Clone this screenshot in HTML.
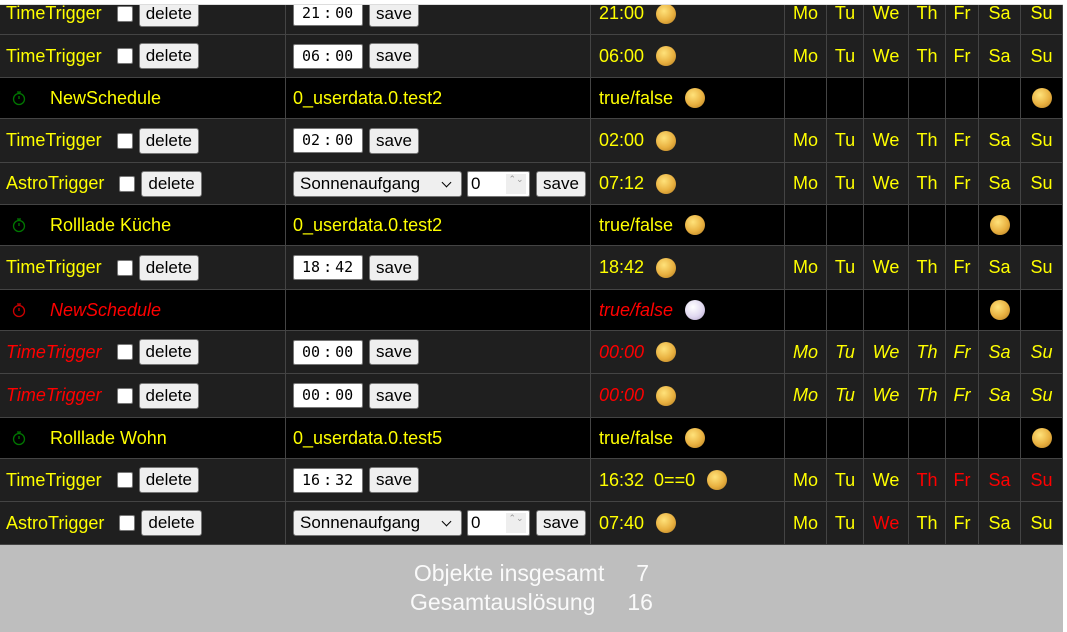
<!DOCTYPE html>
<html><head><meta charset="utf-8"><style>
*{box-sizing:border-box;margin:0;padding:0}
body{width:1067px;height:632px;background:#fff;font-family:"Liberation Sans",sans-serif;font-size:18px;color:#ff0;overflow:hidden;position:relative}
#t{position:absolute;left:0;top:4px;width:1063px;border-top:1px solid #ddd}
.r{display:flex;border-bottom:1px solid #444;background:#1f1f1f;overflow:hidden}
.r.s{background:#000}
.r.first .c{padding-bottom:12px}
.c{border-right:1px solid #444;display:flex;align-items:center;white-space:nowrap;flex:none}
.c1{width:286px;padding-left:6px}.c2{width:305px;padding-left:7px}.c3{width:194px;padding-left:8px}
.d{justify-content:center}
.w1{width:42px}.w2{width:37px}.w3{width:45px}.w4{width:37px}.w5{width:33px}.w6{width:42px}.w7{width:42px}
.cb{display:inline-block;width:16px;height:16px;background:#fff;border:1px solid #777;border-radius:2px}
.btn{display:inline-block;background:#efefef;border:1px solid #767676;border-radius:3px;color:#000;font-size:17px;padding:0 6px;height:26px;line-height:24px}
.tm{display:inline-block;width:70px;height:25px;background:#fff;border:1px solid #767676;border-radius:2px;color:#000;font-family:"DejaVu Sans Mono","Liberation Mono",monospace;font-size:15px;line-height:23px;padding-left:8px;overflow:hidden}
.tm i{font-style:normal;margin:0 3px}
.sel{display:inline-block;width:169px;height:26px;background:#efefef;border:1px solid #767676;border-radius:3px;color:#000;font-size:17px;line-height:24px;padding-left:6px;position:relative}
.sel:after{content:"";position:absolute;right:11px;top:7px;width:6px;height:6px;border-right:1.5px solid #000;border-bottom:1.5px solid #000;transform:rotate(45deg)}
.num{display:inline-block;width:63px;height:26px;background:#fff;border:1px solid #767676;border-radius:2px;color:#000;font-size:17px;line-height:24px;padding-left:3px;position:relative}
.num:after{content:"⌃⌄";position:absolute;right:3px;top:2px;width:20px;height:20px;background:#eee;color:#999;font-size:9px;line-height:10px;text-align:center;white-space:pre-wrap;word-break:break-all}
.sun{display:inline-block;width:20px;height:20px;border-radius:50%;background:radial-gradient(circle at 40% 35%,#ffe27a,#e8b040 55%,#b07a20)}
.moon{display:inline-block;width:20px;height:20px;border-radius:50%;background:radial-gradient(circle at 40% 35%,#fff,#e0d8f0 55%,#b0a0c8)}
.red{color:#f00}.it{font-style:italic}
#f{position:absolute;left:0;top:545px;width:1063px;height:87px;background:#bebebe;color:#fafafa;font-size:23px;text-align:center;line-height:29px;padding-top:14px}
</style></head><body>
<div id="t">
<div class="r first" style="height:30px"><div class="c c1">TimeTrigger<span class="cb" style="margin-left:15px"></span><span class="btn" style="margin-left:6px">delete</span></div><div class="c c2"><span class="tm">21<i>:</i>00</span><span class="btn" style="margin-left:6px">save</span></div><div class="c c3">21:00<span class="sun" style="margin-left:12px"></span></div><div class="c d w1">Mo</div><div class="c d w2">Tu</div><div class="c d w3">We</div><div class="c d w4">Th</div><div class="c d w5">Fr</div><div class="c d w6">Sa</div><div class="c d w7">Su</div></div>
<div class="r" style="height:43px"><div class="c c1">TimeTrigger<span class="cb" style="margin-left:15px"></span><span class="btn" style="margin-left:6px">delete</span></div><div class="c c2"><span class="tm">06<i>:</i>00</span><span class="btn" style="margin-left:6px">save</span></div><div class="c c3">06:00<span class="sun" style="margin-left:12px"></span></div><div class="c d w1">Mo</div><div class="c d w2">Tu</div><div class="c d w3">We</div><div class="c d w4">Th</div><div class="c d w5">Fr</div><div class="c d w6">Sa</div><div class="c d w7">Su</div></div>
<div class="r s" style="height:41px"><div class="c c1"><svg width="16" height="18" style="margin-left:5px" viewBox="0 0 16 18"><circle cx="8" cy="10" r="5.5" fill="none" stroke="#070" stroke-width="1.3"/><path d="M6 3h4M8 3v2M8 10V7" stroke="#070" stroke-width="1.3"/></svg><span style="margin-left:23px">NewSchedule</span></div><div class="c c2">0_userdata.0.test2</div><div class="c c3">true/false<span class="sun" style="margin-left:12px"></span></div><div class="c d w1"></div><div class="c d w2"></div><div class="c d w3"></div><div class="c d w4"></div><div class="c d w5"></div><div class="c d w6"></div><div class="c d w7"><span class="sun"></span></div></div>
<div class="r" style="height:44px"><div class="c c1">TimeTrigger<span class="cb" style="margin-left:15px"></span><span class="btn" style="margin-left:6px">delete</span></div><div class="c c2"><span class="tm">02<i>:</i>00</span><span class="btn" style="margin-left:6px">save</span></div><div class="c c3">02:00<span class="sun" style="margin-left:12px"></span></div><div class="c d w1">Mo</div><div class="c d w2">Tu</div><div class="c d w3">We</div><div class="c d w4">Th</div><div class="c d w5">Fr</div><div class="c d w6">Sa</div><div class="c d w7">Su</div></div>
<div class="r" style="height:42px"><div class="c c1">AstroTrigger<span class="cb" style="margin-left:15px"></span><span class="btn" style="margin-left:6px">delete</span></div><div class="c c2"><span class="sel">Sonnenaufgang</span><span class="num" style="margin-left:5px">0</span><span class="btn" style="margin-left:6px">save</span></div><div class="c c3">07:12<span class="sun" style="margin-left:12px"></span></div><div class="c d w1">Mo</div><div class="c d w2">Tu</div><div class="c d w3">We</div><div class="c d w4">Th</div><div class="c d w5">Fr</div><div class="c d w6">Sa</div><div class="c d w7">Su</div></div>
<div class="r s" style="height:41px"><div class="c c1"><svg width="16" height="18" style="margin-left:5px" viewBox="0 0 16 18"><circle cx="8" cy="10" r="5.5" fill="none" stroke="#070" stroke-width="1.3"/><path d="M6 3h4M8 3v2M8 10V7" stroke="#070" stroke-width="1.3"/></svg><span style="margin-left:23px">Rolllade Küche</span></div><div class="c c2">0_userdata.0.test2</div><div class="c c3">true/false<span class="sun" style="margin-left:12px"></span></div><div class="c d w1"></div><div class="c d w2"></div><div class="c d w3"></div><div class="c d w4"></div><div class="c d w5"></div><div class="c d w6"><span class="sun"></span></div><div class="c d w7"></div></div>
<div class="r" style="height:44px"><div class="c c1">TimeTrigger<span class="cb" style="margin-left:15px"></span><span class="btn" style="margin-left:6px">delete</span></div><div class="c c2"><span class="tm">18<i>:</i>42</span><span class="btn" style="margin-left:6px">save</span></div><div class="c c3">18:42<span class="sun" style="margin-left:12px"></span></div><div class="c d w1">Mo</div><div class="c d w2">Tu</div><div class="c d w3">We</div><div class="c d w4">Th</div><div class="c d w5">Fr</div><div class="c d w6">Sa</div><div class="c d w7">Su</div></div>
<div class="r s" style="height:41px"><div class="c c1"><svg width="16" height="18" style="margin-left:5px" viewBox="0 0 16 18"><circle cx="8" cy="10" r="5.5" fill="none" stroke="#c00" stroke-width="1.3"/><path d="M6 3h4M8 3v2M8 10V7" stroke="#c00" stroke-width="1.3"/></svg><span class="red it" style="margin-left:23px">NewSchedule</span></div><div class="c c2"></div><div class="c c3"><span class="red it">true/false</span><span class="moon" style="margin-left:12px"></span></div><div class="c d w1"></div><div class="c d w2"></div><div class="c d w3"></div><div class="c d w4"></div><div class="c d w5"></div><div class="c d w6"><span class="sun"></span></div><div class="c d w7"></div></div>
<div class="r it" style="height:43px"><div class="c c1"><span class="red">TimeTrigger</span><span class="cb" style="margin-left:15px"></span><span class="btn" style="margin-left:6px;font-style:normal">delete</span></div><div class="c c2" style="font-style:normal"><span class="tm">00<i>:</i>00</span><span class="btn" style="margin-left:6px">save</span></div><div class="c c3"><span class="red">00:00</span><span class="sun" style="margin-left:12px"></span></div><div class="c d w1">Mo</div><div class="c d w2">Tu</div><div class="c d w3">We</div><div class="c d w4">Th</div><div class="c d w5">Fr</div><div class="c d w6">Sa</div><div class="c d w7">Su</div></div>
<div class="r it" style="height:44px"><div class="c c1"><span class="red">TimeTrigger</span><span class="cb" style="margin-left:15px"></span><span class="btn" style="margin-left:6px;font-style:normal">delete</span></div><div class="c c2" style="font-style:normal"><span class="tm">00<i>:</i>00</span><span class="btn" style="margin-left:6px">save</span></div><div class="c c3"><span class="red">00:00</span><span class="sun" style="margin-left:12px"></span></div><div class="c d w1">Mo</div><div class="c d w2">Tu</div><div class="c d w3">We</div><div class="c d w4">Th</div><div class="c d w5">Fr</div><div class="c d w6">Sa</div><div class="c d w7">Su</div></div>
<div class="r s" style="height:41px"><div class="c c1"><svg width="16" height="18" style="margin-left:5px" viewBox="0 0 16 18"><circle cx="8" cy="10" r="5.5" fill="none" stroke="#070" stroke-width="1.3"/><path d="M6 3h4M8 3v2M8 10V7" stroke="#070" stroke-width="1.3"/></svg><span style="margin-left:23px">Rolllade Wohn</span></div><div class="c c2">0_userdata.0.test5</div><div class="c c3">true/false<span class="sun" style="margin-left:12px"></span></div><div class="c d w1"></div><div class="c d w2"></div><div class="c d w3"></div><div class="c d w4"></div><div class="c d w5"></div><div class="c d w6"></div><div class="c d w7"><span class="sun"></span></div></div>
<div class="r" style="height:43px"><div class="c c1">TimeTrigger<span class="cb" style="margin-left:15px"></span><span class="btn" style="margin-left:6px">delete</span></div><div class="c c2"><span class="tm">16<i>:</i>32</span><span class="btn" style="margin-left:6px">save</span></div><div class="c c3">16:32&nbsp; 0==0<span class="sun" style="margin-left:12px"></span></div><div class="c d w1">Mo</div><div class="c d w2">Tu</div><div class="c d w3">We</div><div class="c d w4 red">Th</div><div class="c d w5 red">Fr</div><div class="c d w6 red">Sa</div><div class="c d w7 red">Su</div></div>
<div class="r" style="height:43px"><div class="c c1">AstroTrigger<span class="cb" style="margin-left:15px"></span><span class="btn" style="margin-left:6px">delete</span></div><div class="c c2"><span class="sel">Sonnenaufgang</span><span class="num" style="margin-left:5px">0</span><span class="btn" style="margin-left:6px">save</span></div><div class="c c3">07:40<span class="sun" style="margin-left:12px"></span></div><div class="c d w1">Mo</div><div class="c d w2">Tu</div><div class="c d w3 red">We</div><div class="c d w4">Th</div><div class="c d w5">Fr</div><div class="c d w6">Sa</div><div class="c d w7">Su</div></div>
</div>
<div id="f">Objekte insgesamt&nbsp;&nbsp;&nbsp;&nbsp; 7<br>Gesamtauslösung&nbsp;&nbsp;&nbsp;&nbsp; 16</div>
</body></html>
